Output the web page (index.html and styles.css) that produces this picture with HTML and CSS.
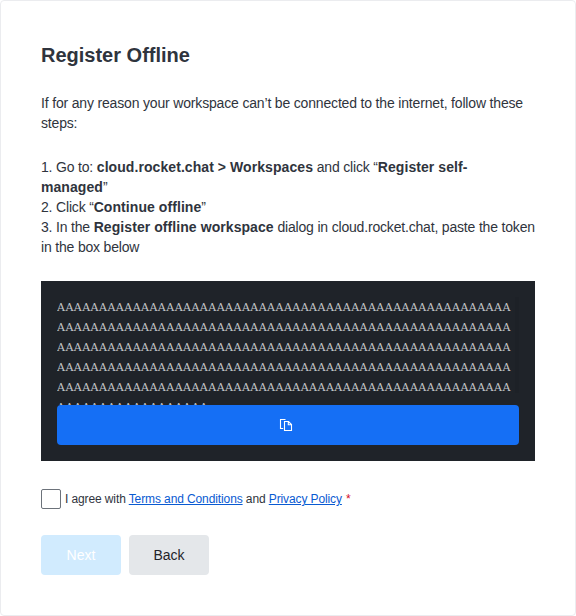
FILE: index.html
```html
<!DOCTYPE html>
<html lang="en">
<head>
<meta charset="utf-8">
<title>Register Offline</title>
<link rel="stylesheet" href="styles.css">
</head>
<body>
<form class="card">
  <h1 class="title">Register Offline</h1>
  <p class="intro">If for any reason your workspace can’t be connected to the internet, follow these<br>steps:</p>
  <ol class="steps">
    <li>1. Go to: <b>cloud.rocket.chat &gt; Workspaces</b> and click “<b>Register self-<br>managed</b>”</li>
    <li>2. Click “<b>Continue offline</b>”</li>
    <li>3. In the <b>Register offline workspace</b> dialog in cloud.rocket.chat, paste the token<br>in the box below</li>
  </ol>
  <div class="token">
    <div class="token-scroll">
      <code class="token-text">AAAAAAAAAAAAAAAAAAAAAAAAAAAAAAAAAAAAAAAAAAAAAAAAAAAAAA<br>AAAAAAAAAAAAAAAAAAAAAAAAAAAAAAAAAAAAAAAAAAAAAAAAAAAAAA<br>AAAAAAAAAAAAAAAAAAAAAAAAAAAAAAAAAAAAAAAAAAAAAAAAAAAAAA<br>AAAAAAAAAAAAAAAAAAAAAAAAAAAAAAAAAAAAAAAAAAAAAAAAAAAAAA<br>AAAAAAAAAAAAAAAAAAAAAAAAAAAAAAAAAAAAAAAAAAAAAAAAAAAAAA<br>AAAAAAAAAAAAAAAAAA</code>
      <span class="track"></span>
    </div>
    <button class="copy" type="button" aria-label="Copy">
      <svg width="16" height="16" viewBox="0 0 16 16" fill="none" stroke="#fff" stroke-width="1.1"><path d="M7.5 2.5H2.5V11.5H5.2M6.5 4.5H10.5L13.5 7.5V13.5H6.5ZM10.3 4.5V7.7H13.5"/></svg>
    </button>
  </div>
  <div class="agree">
    <span class="checkbox"></span>
    <span class="agree-text">I agree with <a href="#">Terms and Conditions</a> and <a href="#">Privacy Policy</a><span class="required">*</span></span>
  </div>
  <div class="actions">
    <button class="btn primary" type="button" disabled>Next</button>
    <button class="btn" type="button">Back</button>
  </div>
</form>
</body>
</html>
```
FILE: styles.css
```css
* { box-sizing: border-box; }
body {
  margin: 0;
  background: #fff;
  color: #2f343d;
  font: 14px/20px "Liberation Sans", Helvetica, Arial, sans-serif;
}
.card {
  height: 616px;
  padding: 38px 40px 40px;
  border: 1px solid #ebecef;
  border-radius: 4px;
  white-space: nowrap;
}
.title { margin: 0 0 22px; font-size: 20px; line-height: 32px; font-weight: 700; }
.intro { margin: 0 0 24px; height: 40px; letter-spacing: -.17px; }
.steps { margin: 0 0 24px; padding: 0; height: 100px; list-style: none; letter-spacing: -.18px; }
.steps b { letter-spacing: .07px; }
.token { height: 180px; padding: 16px; background: #1f2329; }
.token-scroll { display: flex; justify-content: space-between; height: 108px; overflow: hidden; }
.token-text { padding-top: 1px; color: #c4c7ca; font: 11px/20px "DejaVu Serif", serif; letter-spacing: .46px; }
.track { width: 4px; height: 96px; background: #1d2127; }
.copy {
  display: flex;
  align-items: center;
  justify-content: center;
  width: 100%;
  height: 40px;
  padding: 0 4px 0 0;
  border: 0;
  border-radius: 4px;
  background: #156ff5;
}
.agree { display: flex; align-items: center; gap: 4px; height: 20px; margin-top: 28px; font-size: 12px; letter-spacing: -.11px; }
.checkbox { width: 20px; height: 20px; border: 1px solid #6c727a; border-radius: 2px; }
.agree a { color: #095ad2; text-decoration: underline; }
.required { margin-left: 4px; color: #d40c26; }
.actions { display: flex; gap: 8px; margin-top: 26px; }
.btn {
  width: 80px;
  height: 40px;
  padding: 0;
  border: 0;
  border-radius: 4px;
  background: #e4e7ea;
  color: #1f2329;
  font: inherit;
}
.primary { background: #d1ebfe; color: #fff; }
```
